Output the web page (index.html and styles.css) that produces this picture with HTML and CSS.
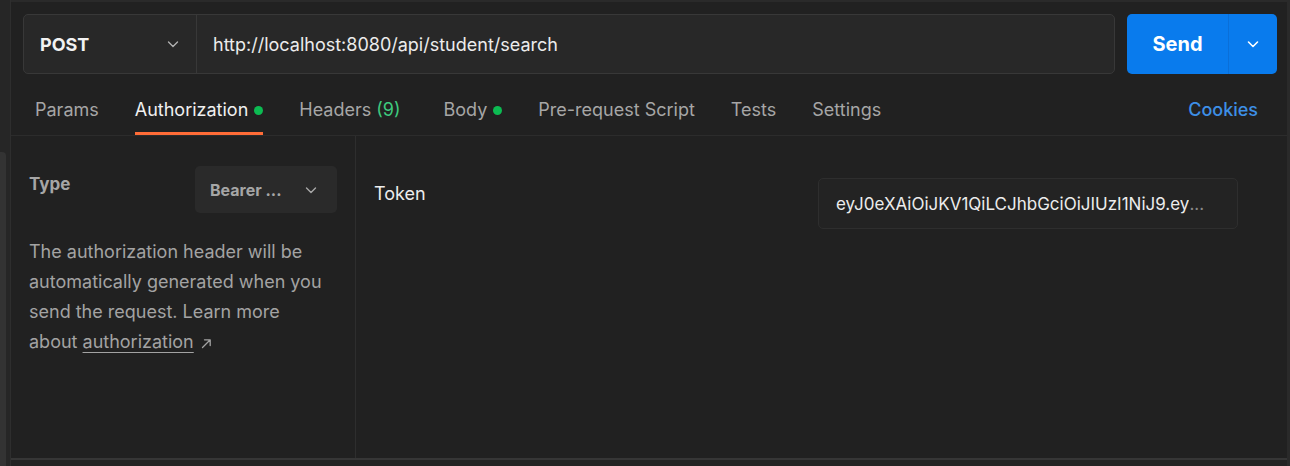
FILE: index.html
```html
<!DOCTYPE html>
<html lang="en">
<head>
<meta charset="utf-8">
<title>Postman request</title>
<link rel="stylesheet" href="styles.css">
</head>
<body>
<div class="app">
  <div class="edge"><div class="scroll-thumb"></div></div>
  <div class="main">
    <div class="request-bar">
      <div class="url-group">
        <div class="method">
          <span class="method-name">POST</span>
          <svg class="chev" width="14" height="14" viewBox="0 0 14 14"><path d="M2.5 5l4.5 4.5L11.5 5" fill="none" stroke="#b0b0b0" stroke-width="1.4" stroke-linecap="round" stroke-linejoin="round"/></svg>
        </div>
        <div class="url">http://localhost:8080/api/student/search</div>
      </div>
      <div class="send">
        <span class="send-label">Send</span>
        <span class="send-more"><svg width="14" height="14" viewBox="0 0 14 14"><path d="M2.5 5l4.5 4.5L11.5 5" fill="none" stroke="#fff" stroke-width="1.6" stroke-linecap="round" stroke-linejoin="round"/></svg></span>
      </div>
    </div>
    <div class="tabs">
      <div class="tab">Params</div>
      <div class="tab active">Authorization<span class="dot"></span></div>
      <div class="tab tab-wide">Headers <span class="count">(9)</span></div>
      <div class="tab">Body<span class="dot"></span></div>
      <div class="tab">Pre-request Script</div>
      <div class="tab">Tests</div>
      <div class="tab">Settings</div>
      <div class="cookies">Cookies</div>
    </div>
    <div class="content">
      <div class="left">
        <div class="type-row">
          <span class="type-label">Type</span>
          <div class="select">
            <span>Bearer ...</span>
            <svg width="14" height="14" viewBox="0 0 14 14"><path d="M2.5 5l4.5 4.5L11.5 5" fill="none" stroke="#a8a8a8" stroke-width="1.4" stroke-linecap="round" stroke-linejoin="round"/></svg>
          </div>
        </div>
        <p class="desc">The authorization header will be automatically generated when you send the request. Learn more about <span class="link">authorization</span> <svg class="arrow" width="11" height="11" viewBox="0 0 11 11"><path d="M1.5 9.5L9 2M3.5 1.8H9.2V7.5" fill="none" stroke="#a3a3a3" stroke-width="1.3" stroke-linecap="round" stroke-linejoin="round"/></svg></p>
      </div>
      <div class="right">
        <div class="token-row">
          <span class="token-label">Token</span>
          <div class="token-input"><span class="token-text">eyJ0eXAiOiJKV1QiLCJhbGciOiJIUzI1NiJ9.ey</span><span class="token-more">...</span></div>
        </div>
      </div>
    </div>
    <div class="footer"></div>
  </div>
</div>
</body>
</html>
```

FILE: styles.css
```css
html, body {
  margin: 0;
  padding: 0;
  background: #212121;
  font-family: Inter, "Noto Sans", "Liberation Sans", sans-serif;
  color: #e6e6e6;
}
.app {
  display: flex;
  height: 466px;
  overflow: hidden;
}
.edge {
  width: 10px;
  flex: 0 0 10px;
  background: #262626;
  border-right: 1px solid #2e2e2e;
  display: flex;
  flex-direction: column;
  padding-top: 152px;
}
.scroll-thumb {
  width: 6px;
  flex: 1;
  background: #333333;
  border-radius: 0 4px 0 0;
}
.main {
  flex: 1;
  display: flex;
  flex-direction: column;
  border-top: 2px solid #2a2a2a;
  border-right: 3px solid #2a2a2a;
  background: #212121;
}
.request-bar {
  display: flex;
  padding: 12px 10px 0 12px;
  gap: 12px;
  height: 60px;
}
.url-group {
  flex: 1;
  display: flex;
  background: #282828;
  border: 1px solid #383838;
  border-radius: 5px;
}
.method {
  width: 173px;
  box-sizing: border-box;
  border-right: 1px solid #383838;
  display: flex;
  align-items: center;
  justify-content: space-between;
  padding: 0 16px 0 16px;
}
.method-name {
  font-weight: 700;
  font-size: 18px;
  color: #f2f2f2;
}
.url {
  display: flex;
  align-items: center;
  padding-left: 16px;
  font-size: 18px;
  color: #ececec;
}
.send {
  width: 150px;
  display: flex;
  background: #097bed;
  border-radius: 5px;
}
.send-label {
  flex: 1;
  display: flex;
  align-items: center;
  justify-content: center;
  font-weight: 700;
  font-size: 20px;
  color: #ffffff;
  border-right: 1px solid #0a6fd8;
}
.send-more {
  width: 48px;
  display: flex;
  align-items: center;
  justify-content: center;
}
.tabs {
  display: flex;
  align-items: flex-end;
  padding: 0 29px 0 24px;
  margin-top: 14px;
  border-bottom: 1px solid #2c2c2c;
}
.tab {
  font-size: 18px;
  line-height: 24px;
  color: #a6a6a6;
  padding: 10px 0 10px;
  border-bottom: 3px solid transparent;
  margin-right: 36px;
  display: flex;
  align-items: center;
  white-space: nowrap;
}
.tab-wide {
  margin-right: 43px;
}
.tab.active {
  color: #f0f0f0;
  border-bottom-color: #ff6c37;
}
.count {
  color: #3ec97e;
  margin-left: 5px;
}
.dot {
  width: 9px;
  height: 9px;
  border-radius: 50%;
  background: #0cbb52;
  margin-left: 6px;
}
.cookies {
  margin-left: auto;
  font-size: 18px;
  line-height: 24px;
  padding-bottom: 13px;
  color: #3d8fe6;
  font-weight: 500;
}
.content {
  display: flex;
  height: 322px;
  border-bottom: 2px solid #363636;
}
.left {
  width: 345px;
  flex: 0 0 345px;
  box-sizing: border-box;
  border-right: 1px solid #2e2e2e;
  padding: 30px 18px 0 18px;
}
.type-row {
  display: flex;
  justify-content: space-between;
  align-items: flex-start;
}
.type-label {
  font-weight: 700;
  font-size: 17px;
  color: #a6a6a6;
  margin-top: 8px;
}
.select {
  width: 142px;
  height: 47px;
  box-sizing: border-box;
  background: #2a2a2a;
  border-radius: 5px;
  display: flex;
  align-items: center;
  justify-content: space-between;
  padding: 0 19px 0 15px;
  font-weight: 700;
  font-size: 16px;
  color: #a6a6a6;
}
.desc {
  margin: 24px 0 0 0;
  padding-right: 8px;
  font-size: 18px;
  line-height: 30px;
  color: #a3a3a3;
}
.link {
  color: #a3a3a3;
  text-decoration: underline;
  text-underline-offset: 4px;
}
.arrow {
  margin-left: 2px;
  vertical-align: -1px;
}
.right {
  flex: 1;
  padding: 42px 49px 0 18px;
}
.token-row {
  display: flex;
  justify-content: space-between;
  align-items: flex-start;
}
.token-label {
  font-size: 18px;
  color: #ededed;
  margin-top: 5px;
}
.token-input {
  width: 420px;
  height: 51px;
  box-sizing: border-box;
  border: 1px solid #2e2e2e;
  background: #232323;
  border-radius: 5px;
  display: flex;
  align-items: center;
  padding: 0 16px 0 17px;
  font-size: 17px;
  color: #ececec;
  white-space: nowrap;
  overflow: hidden;
}
.token-text {
  overflow: hidden;
}
.token-more {
  color: #8a8a8a;
}
.footer {
  flex: 1;
  background: #232323;
}
```
